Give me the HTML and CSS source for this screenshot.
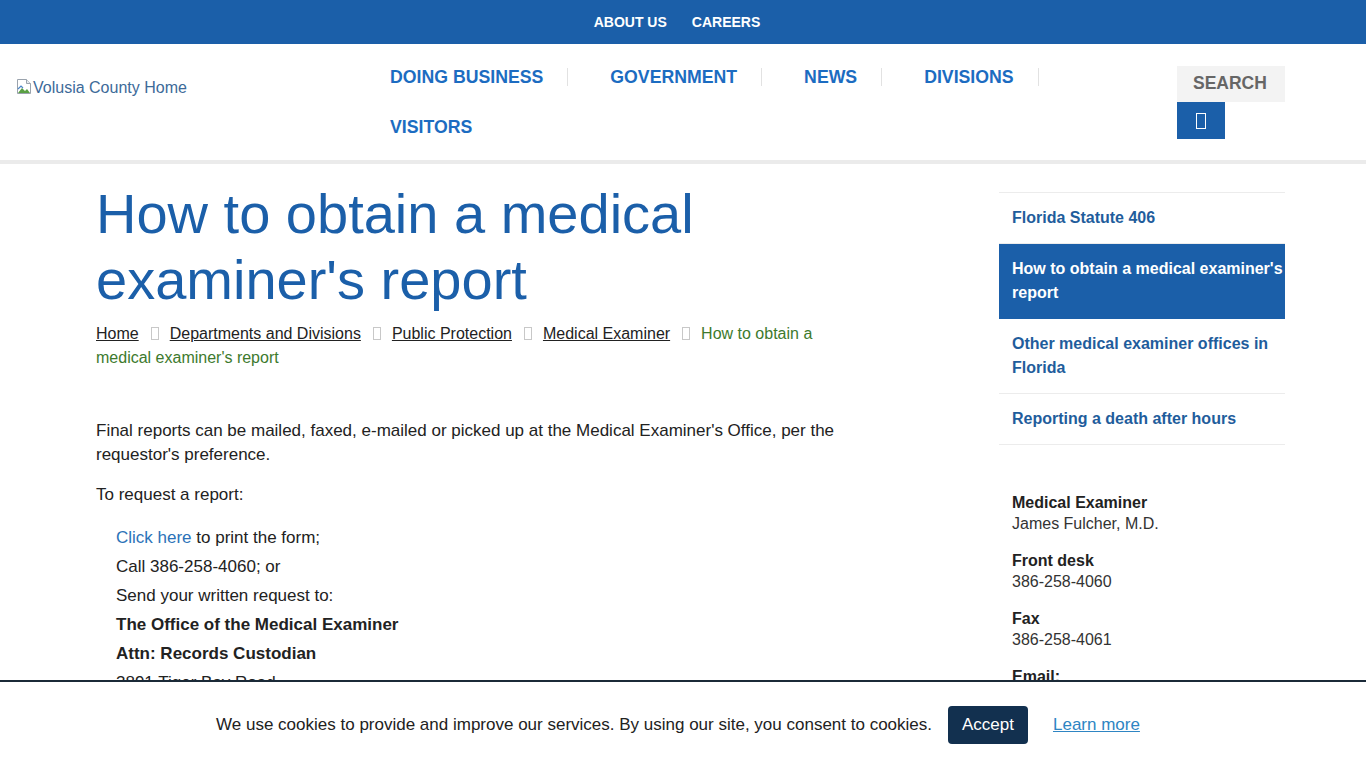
FILE: index.html
```html
<!DOCTYPE html>
<html lang="en">
<head>
<meta charset="utf-8">
<title>How to obtain a medical examiner's report</title>
<link rel="stylesheet" href="styles.css">
</head>
<body>
<div class="topbar">
  <a href="#">ABOUT US</a>
  <a href="#">CAREERS</a>
</div>
<header class="header">
  <a class="logo" href="#">
    <svg class="broken" width="16" height="17" viewBox="0 0 16 17">
      <path d="M1.5 1.5h9l4 4v10h-13z" fill="#fff" stroke="#9aa3ad"/>
      <path d="M10.5 1.5v4h4" fill="#e8ecef" stroke="#9aa3ad"/>
      <path d="M2 15l4-5 3 3 2-2 3 4z" fill="#5aa043"/>
      <path d="M2 11l3-3 2 2" fill="none" stroke="#4d86c6" stroke-width="1.2"/>
    </svg><span>Volusia County Home</span>
  </a>
  <nav class="mainnav">
    <ul>
      <li><a href="#">DOING BUSINESS</a></li>
      <li><a href="#">GOVERNMENT</a></li>
      <li><a href="#">NEWS</a></li>
      <li><a href="#">DIVISIONS</a></li>
      <li><a href="#">VISITORS</a></li>
    </ul>
  </nav>
  <div class="search">
    <div class="search-box">SEARCH</div>
    <button class="search-btn" type="button"><span class="tofu tofu-white"></span></button>
  </div>
</header>

<div class="page">
  <main class="main">
    <h1>How to obtain a medical examiner's report</h1>
    <div class="breadcrumb">
      <a href="#">Home</a><span class="tofu"></span><a href="#">Departments and Divisions</a><span class="tofu"></span><a href="#">Public Protection</a><span class="tofu"></span><a href="#">Medical Examiner</a><span class="tofu"></span><span class="current">How to obtain a medical examiner's report</span>
    </div>
    <p class="first">Final reports can be mailed, faxed, e-mailed or picked up at the Medical Examiner's Office, per the requestor's preference.</p>
    <p>To request a report:</p>
    <div class="steps">
      <div><a href="#">Click here</a> to print the form;</div>
      <div>Call 386-258-4060; or</div>
      <div>Send your written request to:</div>
      <div><strong>The Office of the Medical Examiner</strong></div>
      <div><strong>Attn: Records Custodian</strong></div>
      <div>3891 Tiger Bay Road</div>
      <div>Daytona Beach, FL 32124</div>
    </div>
  </main>
  <aside class="sidebar">
    <ul class="sidenav">
      <li><a href="#">Florida Statute 406</a></li>
      <li class="active"><a href="#">How to obtain a medical examiner's report</a></li>
      <li><a href="#">Other medical examiner offices in Florida</a></li>
      <li><a href="#">Reporting a death after hours</a></li>
    </ul>
    <div class="contact">
      <div class="group"><strong>Medical Examiner</strong><span>James Fulcher, M.D.</span></div>
      <div class="group"><strong>Front desk</strong><span>386-258-4060</span></div>
      <div class="group"><strong>Fax</strong><span>386-258-4061</span></div>
      <div class="group"><strong>Email:</strong><span>medicalexaminer@volusia.org</span></div>
    </div>
  </aside>
</div>

<div class="cookie">
  <span class="cookie-text">We use cookies to provide and improve our services. By using our site, you consent to cookies.</span>
  <button class="accept" type="button">Accept</button>
  <a class="learn" href="#">Learn more</a>
</div>
</body>
</html>
```
FILE: styles.css
```css
* { box-sizing: border-box; }
html, body { margin: 0; padding: 0; }
body {
  font-family: "Liberation Sans", Arial, sans-serif;
  font-size: 16px;
  color: #222;
  background: #fff;
}
a { text-decoration: none; }

.topbar {
  height: 44px;
  background: #1b5fa9;
  display: flex;
  justify-content: center;
  align-items: center;
  gap: 25px;
  padding-right: 12px;
}
.topbar a {
  color: #fff;
  font-weight: bold;
  font-size: 14px;
}

.header {
  height: 120px;
  border-bottom: 4px solid #ebebeb;
  display: flex;
  align-items: flex-start;
}
.logo {
  width: 390px;
  padding-left: 16px;
  margin-top: 34px;
  display: flex;
  align-items: center;
  color: #3d6a99;
  font-size: 16px;
  line-height: 20px;
}
.broken { margin-right: 1px; margin-top: -3px; }

.mainnav { width: 760px; padding-top: 8px; }
.mainnav ul {
  list-style: none;
  margin: 0;
  padding: 0;
  display: flex;
  flex-wrap: wrap;
}
.mainnav li {
  display: flex;
  align-items: center;
  height: 50px;
}
.mainnav li::after {
  content: "";
  width: 1px;
  height: 18px;
  background: #e2e2e2;
  margin: 0 42px 0 24px;
}
.mainnav li:last-child::after { display: none; }
.mainnav a {
  color: #1c6cc1;
  font-weight: bold;
  font-size: 17.7px;
}

.search { margin-left: 27px; margin-top: 22px; }
.search-box {
  width: 108px;
  height: 36px;
  background: #f3f3f3;
  color: #666;
  font-weight: bold;
  font-size: 17.5px;
  line-height: 34px;
  padding-left: 16px;
}
.search-btn {
  display: flex;
  align-items: center;
  justify-content: center;
  width: 48px;
  height: 37px;
  border: 0;
  padding: 0;
  background: #1b5fa9;
}

.tofu {
  display: inline-block;
  width: 8px;
  height: 13px;
  border: 1px solid #c8c8c8;
  vertical-align: -1px;
  margin: 0 11px 0 12px;
}
.tofu-white {
  width: 10px;
  height: 16px;
  margin: 0;
  border-color: #fff;
}

.page {
  display: flex;
  padding: 0 81px 0 96px;
}
.main { flex: 0 0 750px; }
.main h1 {
  margin: 17px 0 0;
  font-size: 56px;
  line-height: 66px;
  font-weight: normal;
  color: #1b5fa9;
}
.breadcrumb {
  margin-top: 9px;
  line-height: 24px;
  width: 730px;
}
.breadcrumb a {
  color: #222;
  text-decoration: underline;
}
.breadcrumb .current { color: #3d7a2d; }

.main p {
  margin: 0 0 16px;
  font-size: 17px;
  line-height: 24px;
}
.main p.first { margin-top: 49px; }
.steps { padding-left: 20px; font-size: 17px; }
.steps div { line-height: 29px; }
.steps a { color: #2b72b8; }
.steps strong { font-weight: bold; color: #222; }

.sidebar {
  width: 286px;
  margin-left: auto;
  margin-top: 28px;
}
.sidenav {
  list-style: none;
  margin: 0;
  padding: 0;
  border-top: 1px solid #ececec;
}
.sidenav li { border-bottom: 1px solid #ececec; }
.sidenav a {
  display: block;
  padding: 13px 0 13px 13px;
  line-height: 24px;
  font-weight: bold;
  color: #1f5d9c;
}
.sidenav li.active { background: #1b5fa9; border-bottom-color: #1b5fa9; }
.sidenav li.active a { color: #fff; }

.contact {
  margin-top: 47px;
  padding-left: 13px;
}
.group {
  display: flex;
  flex-direction: column;
  line-height: 21px;
  margin-bottom: 16px;
}
.group strong { color: #222; }
.group span { color: #333; }

.cookie {
  position: fixed;
  left: 0;
  right: 0;
  bottom: 0;
  height: 88px;
  background: #fff;
  border-top: 2px solid #1b2a38;
  display: flex;
  justify-content: center;
  align-items: center;
  padding-right: 10px;
  font-size: 17px;
}
.cookie-text { color: #222; }
.accept {
  margin-left: 16px;
  height: 38px;
  padding: 0 14px;
  background: #12304f;
  color: #fff;
  border: 0;
  border-radius: 4px;
  font-family: "Liberation Sans", Arial, sans-serif;
  font-size: 17px;
}
.learn {
  margin-left: 25px;
  color: #2e85c3;
  text-decoration: underline;
}
```
